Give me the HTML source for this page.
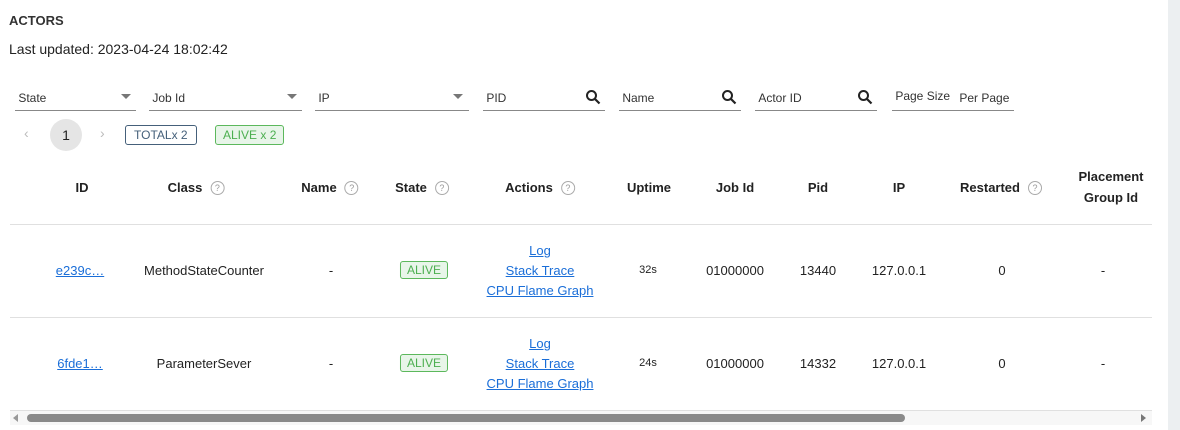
<!DOCTYPE html>
<html><head><style>
*{margin:0;padding:0;box-sizing:border-box}
body{width:1180px;height:430px;background:#fff;font-family:"Liberation Sans",sans-serif;color:#222;position:relative;overflow:hidden;font-size:13px}
.a{position:absolute;white-space:nowrap}
.c{transform:translateX(-50%);text-align:center}
.strip{position:absolute;left:1168px;top:0;width:12px;height:430px;background:#eceff1}
.f{position:absolute;top:85px;height:26px;border-bottom:1px solid #888;font-size:12px;color:#333;padding-top:6px;white-space:nowrap}
.tri{position:absolute;top:9px;width:0;height:0;border-left:5px solid transparent;border-right:5px solid transparent;border-top:5px solid #777}
.h{font-weight:bold;font-size:13px;top:180px}
.q{display:inline-block;width:14px;height:14px;border:1px solid #aaa;border-radius:50%;font-size:9px;color:#999;text-align:center;line-height:12px;font-weight:normal;margin-left:8px;vertical-align:1px}
.line{position:absolute;left:10px;width:1142px;height:1px;background:#e0e0e0}
a{color:#1a6ed8;text-decoration:underline}
.alive{border:1px solid #5cb85c;background:#e8f5e9;color:#4caf50;border-radius:3px;font-size:12px;padding:1px 6px}
.td{font-size:13px}
</style></head><body>
<div class="strip"></div>
<div class="a" style="left:9px;top:13px;font-weight:bold;font-size:13px;color:#333">ACTORS</div>
<div class="a" style="left:9px;top:41px;font-size:14px">Last updated: 2023-04-24 18:02:42</div>

<div class="f" style="left:15px;width:121px">&nbsp;State<div class="tri" style="left:106px"></div></div>
<div class="f" style="left:149px;width:153px">&nbsp;Job Id<div class="tri" style="left:138px"></div></div>
<div class="f" style="left:315px;width:154px">&nbsp;IP<div class="tri" style="left:138px"></div></div>
<div class="f" style="left:483px;width:122px">&nbsp;PID<svg class="a" style="left:102px;top:4px" width="16" height="16" viewBox="0 0 16 16"><circle cx="6.5" cy="6.5" r="4.5" fill="none" stroke="#222" stroke-width="2"/><path d="M10 10l4.5 4.5" stroke="#222" stroke-width="2.2"/></svg></div>
<div class="f" style="left:619px;width:122px">&nbsp;Name<svg class="a" style="left:102px;top:4px" width="16" height="16" viewBox="0 0 16 16"><circle cx="6.5" cy="6.5" r="4.5" fill="none" stroke="#222" stroke-width="2"/><path d="M10 10l4.5 4.5" stroke="#222" stroke-width="2.2"/></svg></div>
<div class="f" style="left:755px;width:122px">&nbsp;Actor ID<svg class="a" style="left:102px;top:4px" width="16" height="16" viewBox="0 0 16 16"><circle cx="6.5" cy="6.5" r="4.5" fill="none" stroke="#222" stroke-width="2"/><path d="M10 10l4.5 4.5" stroke="#222" stroke-width="2.2"/></svg></div>
<div class="f" style="left:892px;width:122px;padding-top:4px">&nbsp;Page Size <span style="margin-left:6px;position:relative;top:2px">Per Page</span></div>

<div class="a" style="left:24px;top:125px;color:#bbb;font-size:14px">‹</div>
<div class="a" style="left:50px;top:119px;width:32px;height:32px;border-radius:50%;background:#e5e5e5;text-align:center;line-height:32px;font-size:14px">1</div>
<div class="a" style="left:100px;top:125px;color:#bbb;font-size:14px">›</div>
<div class="a" style="left:125px;top:125px;height:20px;border:1px solid #45607a;border-radius:3px;padding:2px 8px;font-size:12px;color:#45607a">TOTALx 2</div>
<div class="a" style="left:215px;top:125px;height:20px;border:1px solid #5cb85c;background:#e8f5e9;border-radius:3px;padding:2px 7px;font-size:12px;color:#4caf50">ALIVE x 2</div>

<div class="a c h" style="left:82px">ID</div>
<div class="a c h" style="left:196px">Class<span class="q">?</span></div>
<div class="a c h" style="left:330px">Name<span class="q">?</span></div>
<div class="a c h" style="left:422px">State<span class="q">?</span></div>
<div class="a c h" style="left:540px">Actions<span class="q">?</span></div>
<div class="a c h" style="left:649px">Uptime</div>
<div class="a c h" style="left:735px">Job Id</div>
<div class="a c h" style="left:818px">Pid</div>
<div class="a c h" style="left:899px">IP</div>
<div class="a c h" style="left:1001px">Restarted<span class="q">?</span></div>
<div class="a c h" style="left:1111px;top:166px;line-height:21px">Placement<br>Group Id</div>

<div class="line" style="top:224px"></div>
<div class="line" style="top:317px"></div>
<div class="line" style="top:410px"></div>

<div class="a c td" style="left:80px;top:263px"><a>e239c…</a></div>
<div class="a c td" style="left:204px;top:263px">MethodStateCounter</div>
<div class="a c td" style="left:331px;top:263px">-</div>
<div class="a c" style="left:424px;top:262px"><span class="alive">ALIVE</span></div>
<div class="a c td" style="left:540px;top:241px;line-height:20px"><a>Log</a><br><a>Stack Trace</a><br><a>CPU Flame Graph</a></div>
<div class="a c" style="left:648px;top:264px;font-size:11px">32s</div>
<div class="a c td" style="left:735px;top:263px">01000000</div>
<div class="a c td" style="left:818px;top:263px">13440</div>
<div class="a c td" style="left:899px;top:263px">127.0.0.1</div>
<div class="a c td" style="left:1002px;top:263px">0</div>
<div class="a c td" style="left:1103px;top:263px">-</div>

<div class="a c td" style="left:80px;top:356px"><a>6fde1…</a></div>
<div class="a c td" style="left:204px;top:356px">ParameterSever</div>
<div class="a c td" style="left:331px;top:356px">-</div>
<div class="a c" style="left:424px;top:355px"><span class="alive">ALIVE</span></div>
<div class="a c td" style="left:540px;top:334px;line-height:20px"><a>Log</a><br><a>Stack Trace</a><br><a>CPU Flame Graph</a></div>
<div class="a c" style="left:648px;top:357px;font-size:11px">24s</div>
<div class="a c td" style="left:735px;top:356px">01000000</div>
<div class="a c td" style="left:818px;top:356px">14332</div>
<div class="a c td" style="left:899px;top:356px">127.0.0.1</div>
<div class="a c td" style="left:1002px;top:356px">0</div>
<div class="a c td" style="left:1103px;top:356px">-</div>

<div class="a" style="left:10px;top:411px;width:1142px;height:14px;background:#f7f7f7"></div>
<div class="a" style="left:13px;top:414px;width:0;height:0;border-top:4px solid transparent;border-bottom:4px solid transparent;border-right:5px solid #999"></div>
<div class="a" style="left:27px;top:414px;width:878px;height:8px;border-radius:4px;background:#8a8a8a"></div>
<div class="a" style="left:1141px;top:414px;width:0;height:0;border-top:4px solid transparent;border-bottom:4px solid transparent;border-left:5px solid #777"></div>
</body></html>
